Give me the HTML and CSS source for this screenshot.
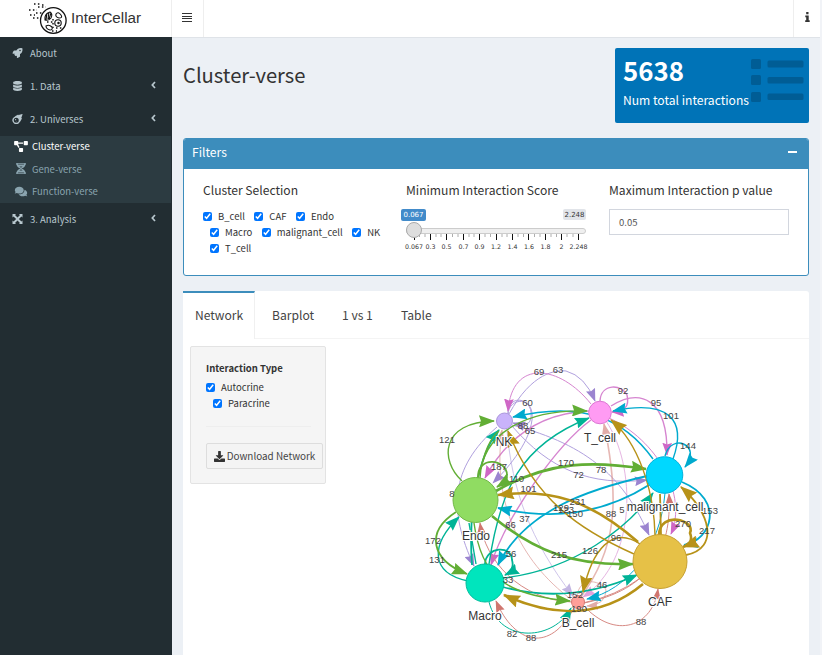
FILE: index.html
```html
<!DOCTYPE html>
<html lang="en">
<head>
<meta charset="utf-8">
<title>InterCellar</title>
<link rel="stylesheet" href="styles.css">
</head>
<body>
<div class="app">
<header class="topbar">
  <div class="brand">
    <svg class="logo" viewBox="0 0 40 34" fill="none" stroke="#111" stroke-width="1.1">
      <circle cx="25.300" cy="18.500" r="12.800" stroke-width="1.300"/>
      <path d="M17 18q-1-6 5-8q3 2 1 6q-2 3-6 2zM19 11l-1 7M21 10l-1 7M23 11l-2 6"/>
      <path d="M28 12q2-3 5 1q2 3-2 3q-4-1-3-4zM18 24q3-2 6 1q1 3-2 3q-4-1-4-4z"/>
      <circle cx="30" cy="21" r="3.200"/><circle cx="30.500" cy="21" r=".7"/>
      <path stroke-width="1.400" stroke-dasharray="1.500 2.400" d="M1 8h8M6 2h7M2 13h5M5 16h7M10 5h8M8 11h6M14 3h2M25 17v9M28 26h7M19 20h6M24 29h5"/>
    </svg>
    <span>InterCellar</span>
  </div>
  <div class="toggle"><svg width="10" height="9" viewBox="0 0 10 9" fill="#333" shape-rendering="crispEdges"><path d="M0 0h10v1H0zM0 2.500h10v1.300H0zM0 5h10v1.300H0zM0 7.500h10v1.300H0z"/></svg></div>
  <div class="info"><svg width="5" height="10" viewBox="0 0 5 10" fill="#333"><path d="M1.200 0h2.300v2.200H1.200zM.3 3.500h3.400v4.700h1V10H.2V8.200h1V5.200H.3z"/></svg></div>
</header>
<div class="body">
<nav class="side">
  <a class="item"><svg class="ic" viewBox="0 0 512 512"><path d="M505.120 19.094c-1.190-5.531-6.658-11-12.207-12.188C460.716 0 435.507 0 410.407 0 307.175 0 245.269 55.203 199.052 128H94.838c-16.348.016-35.557 11.875-42.887 26.484L2.516 253.297A28.400 28.400 0 0 0 0 264a24 24 0 0 0 24 24h103.816l-22.475 22.469c-11.365 11.361-12.996 32.258 0 45.250l50.905 50.906c11.156 11.188 32.156 13.156 45.277 0l22.475-22.469V488a24 24 0 0 0 24 24 28.560 28.560 0 0 0 10.707-2.516l98.728-49.390c14.629-7.297 26.508-26.500 26.508-42.860V312.797c72.598-46.313 128.035-108.406 128.035-211.094 0-25.203 0-50.406-6.856-82.609zM384.040 168a40 40 0 1 1 40-40 40 40 0 0 1-40 40z"/></svg><span>About</span></a>
  <a class="item"><svg class="ic" viewBox="-32 0 512 512"><path d="M448 73.143v45.714C448 159.143 347.667 192 224 192S0 159.143 0 118.857V73.143C0 32.857 100.333 0 224 0s224 32.857 224 73.143zM448 176v102.857C448 319.143 347.667 352 224 352S0 319.143 0 278.857V176c48.125 33.143 136.208 48.572 224 48.572S399.874 209.143 448 176zm0 160v102.857C448 479.143 347.667 512 224 512S0 479.143 0 438.857V336c48.125 33.143 136.208 48.572 224 48.572S399.874 369.143 448 336z"/></svg><span>1. Data</span><svg class="chev" viewBox="0 0 5 8"><path d="M4 1L1.300 4L4 7"/></svg></a>
  <a class="item"><svg class="ic" viewBox="0 0 512 512"><path d="M511.328 20.803c-11.608 38.702-34.307 111.702-61.303 187.700 6.999 2.094 13.404 4 18.607 5.594a16.060 16.060 0 0 1 9.498 22.906c-22.106 42.296-82.690 152.795-142.478 214.404-1 1.093-2 2.500-3 3.500A194.830 194.830 0 1 1 57.085 179.410c1-1 2.406-2 3.500-3 61.600-59.905 171.973-120.405 214.373-142.498a16.058 16.058 0 0 1 22.903 9.500c1.593 5.094 3.500 11.594 5.593 18.593C379.348 35.006 452.431 12.303 491.128.709a16.183 16.183 0 0 1 20.200 20.094zM319.951 320A127.980 127.980 0 1 0 191.970 448 127.976 127.976 0 0 0 319.951 320zM191.970 288a32 32 0 1 1-32-32 32 32 0 0 1 32 32zm32 80a16 16 0 1 1-16-16 16 16 0 0 1 16 16z"/></svg><span>2. Universes</span><svg class="chev" viewBox="0 0 5 8"><path d="M4 1L1.300 4L4 7"/></svg></a>
  <div class="sub">
    <a class="on"><svg class="ic2" viewBox="0 0 640 512"><path d="M384 320H256c-17.670 0-32 14.330-32 32v128c0 17.670 14.330 32 32 32h128c17.670 0 32-14.330 32-32V352c0-17.670-14.330-32-32-32zM192 32c0-17.670-14.330-32-32-32H32C14.330 0 0 14.330 0 32v128c0 17.670 14.330 32 32 32h95.720l73.160 128.040C211.980 300.980 232.400 288 256 288h.280L192 175.510V128h224V64H192V32zM608 0H480c-17.670 0-32 14.330-32 32v128c0 17.670 14.330 32 32 32h128c17.670 0 32-14.330 32-32V32c0-17.670-14.330-32-32-32z"/></svg><span>Cluster-verse</span></a>
    <a><svg class="ic2" viewBox="0 0 14 12" fill="none" stroke="#8aa4af" stroke-width="1.400"><path d="M2.500 0v1.500Q3 4 7 6T11.500 10.500V12M11.500 0v1.500Q11 4 7 6T2.500 10.500V12M2.500 1h9M3.500 3h7M3.500 9h7M2.500 11h9"/></svg><span>Gene-verse</span></a>
    <a><svg class="ic2" viewBox="0 0 576 512"><path d="M416 192c0-88.400-93.100-160-208-160S0 103.600 0 192c0 34.300 14.100 65.900 38 92-13.400 30.200-35.500 54.200-35.800 54.500-2.200 2.300-2.800 5.700-1.500 8.700S4.800 352 8 352c36.600 0 66.900-12.300 88.700-25 32.200 15.700 70.300 25 111.300 25 114.900 0 208-71.600 208-160zm122 220c23.900-26 38-57.700 38-92 0-66.900-53.500-124.200-129.300-148.100.9 6.600 1.300 13.300 1.300 20.100 0 105.900-107.700 192-240 192-10.800 0-21.300-.8-31.700-1.900C207.800 439.600 281.800 480 368 480c41 0 79.100-9.200 111.300-25 21.800 12.700 52.100 25 88.700 25 3.200 0 6.100-1.900 7.300-4.800 1.300-2.900.7-6.300-1.500-8.700-.3-.3-22.400-24.200-35.800-54.500z"/></svg><span>Function-verse</span></a>
  </div>
  <a class="item"><svg class="ic" viewBox="0 0 10 10"><path d="M0 0h3.600L2.500 1.100 5 3.600 7.500 1.100 6.400 0H10v3.600L8.900 2.500 6.400 5l2.500 2.500L10 6.400V10H6.400l1.100-1.100L5 6.400 2.500 8.900 3.600 10H0V6.400l1.100 1.100L3.600 5 1.100 2.500 0 3.600z"/></svg><span>3. Analysis</span><svg class="chev" viewBox="0 0 5 8"><path d="M4 1L1.300 4L4 7"/></svg></a>
</nav>
<main class="main">
  <section class="head">
    <h1>Cluster-verse</h1>
    <div class="vbox">
      <div><b>5638</b><p>Num total interactions</p></div>
      <svg class="list" width="53" height="44" viewBox="0 0 53 44" fill="#005d95"><rect y="1" width="10" height="10" rx="1.500"/><rect y="17" width="10" height="10" rx="1.500"/><rect y="34" width="10" height="10" rx="1.500"/><rect x="16.500" y="2.500" width="36" height="7" rx="1.500"/><rect x="16.500" y="19" width="36" height="6.500" rx="1.500"/><rect x="16.500" y="35.500" width="36" height="6.500" rx="1.500"/></svg>
    </div>
  </section>
  <section class="filters">
    <div class="fhead"><span>Filters</span><i class="minus"></i></div>
    <div class="fbody">
      <div class="c1">
        <h4>Cluster Selection</h4>
        <div class="checks">
          <label><input type="checkbox" checked>B_cell</label><label><input type="checkbox" checked>CAF</label><label><input type="checkbox" checked>Endo</label>
        </div>
        <div class="checks in">
          <label><input type="checkbox" checked>Macro</label><label><input type="checkbox" checked>malignant_cell</label><label><input type="checkbox" checked>NK</label>
        </div>
        <div class="checks in"><label><input type="checkbox" checked>T_cell</label></div>
      </div>
      <div class="c2">
        <h4>Minimum Interaction Score</h4>
        <svg class="slider" width="196" height="46" viewBox="400 207 196 46">
          <rect x="401" y="209" width="25" height="12" rx="2" fill="#428bca"/>
          <rect x="563" y="209" width="23" height="11" rx="2" fill="#e1e4e9"/>
          <rect x="406.500" y="228.500" width="179" height="5" rx="2.500" fill="#efefef" stroke="#ccc"/>
          <path stroke="#999" stroke-width=".8" d="M419.500 234v3M425 234v3M436 234v3M441 234v3M452.500 234v3M458 234v3M469 234v3M474 234v3M485 234v3M490.500 234v3M502 234v3M507 234v3M518 234v3M523.500 234v3M534.500 234v3M540 234v3M551 234v3M556.500 234v3M567 234v3M573 234v3"/>
          <path stroke="#111" d="M414.500 234v6M430.500 234v6M446.500 234v6M463.500 234v6M479.500 234v6M496.500 234v6M512.500 234v6M528.500 234v6M545.500 234v6M561.500 234v6M578.500 234v6"/>
          <circle cx="414" cy="230" r="7.500" fill="#dedede" stroke="#aaa"/>
          <g text-anchor="middle" class="tick">
            <text class="big" x="413.500" y="217" fill="#fff">0.067</text><text class="big" x="574.500" y="217">2.248</text>
            <text x="414" y="249">0.067</text><text x="430.500" y="249">0.3</text><text x="446.500" y="249">0.5</text><text x="463.500" y="249">0.7</text><text x="479.500" y="249">0.9</text><text x="496" y="249">1.2</text><text x="512.500" y="249">1.4</text><text x="529" y="249">1.6</text><text x="545.500" y="249">1.8</text><text x="561.500" y="249">2</text><text x="578.500" y="249">2.248</text>
          </g>
        </svg>
      </div>
      <div class="c3">
        <h4>Maximum Interaction p value</h4>
        <div class="field">0.05</div>
      </div>
    </div>
  </section>
  <section class="tabs">
    <div class="tabrow"><a class="t1">Network</a><a class="t2">Barplot</a><a class="t3">1 vs 1</a><a class="t4">Table</a></div>
    <div class="pane">
      <div class="well">
        <strong>Interaction Type</strong>
        <label><input type="checkbox" checked>Autocrine</label>
        <label class="in"><input type="checkbox" checked>Paracrine</label>
        <hr>
        <button><svg width="11" height="11" viewBox="0 0 512 512" fill="#333"><path d="M216 0h80c13 0 24 11 24 24v168h88c18 0 27 21 14 34L270 378c-8 8-20 8-28 0L90 226c-13-13-4-34 14-34h88V24c0-13 11-24 24-24zm296 376v112c0 13-11 24-24 24H24c-13 0-24-11-24-24V376c0-13 11-24 24-24h147l49 49c20 20 52 20 72 0l49-49h147c13 0 24 11 24 24z"/></svg><span>Download Network</span></button>
      </div>
      <svg class="net" width="469" height="316" viewBox="340 339 469 316">
        <defs>
          <marker id="g" viewBox="0 0 16 12" refX="15" refY="6" markerWidth="16" markerHeight="12" markerUnits="userSpaceOnUse" orient="auto"><path d="M0 0L16 6L0 12L2 6z" fill="#62ae35"/></marker>
          <marker id="m" viewBox="0 0 16 12" refX="15" refY="6" markerWidth="15" markerHeight="11.500" markerUnits="userSpaceOnUse" orient="auto"><path d="M0 0L16 6L0 12L2 6z" fill="#00b396"/></marker>
          <marker id="b" viewBox="0 0 16 12" refX="15" refY="6" markerWidth="15" markerHeight="11" markerUnits="userSpaceOnUse" orient="auto"><path d="M0 0L16 6L0 12L2 6z" fill="#00aace"/></marker>
          <marker id="c" viewBox="0 0 16 12" refX="15" refY="6" markerWidth="17" markerHeight="13" markerUnits="userSpaceOnUse" orient="auto"><path d="M0 0L16 6L0 12L2 6z" fill="#b79218"/></marker>
          <marker id="r" viewBox="0 0 16 12" refX="15" refY="6" markerWidth="12" markerHeight="9" markerUnits="userSpaceOnUse" orient="auto"><path d="M0 0L16 6L0 12L2 6z" fill="#d0766f"/></marker>
          <marker id="p" viewBox="0 0 16 12" refX="15" refY="6" markerWidth="13" markerHeight="10" markerUnits="userSpaceOnUse" orient="auto"><path d="M0 0L16 6L0 12L2 6z" fill="#cf67c6"/></marker>
          <marker id="v" viewBox="0 0 16 12" refX="15" refY="6" markerWidth="13" markerHeight="10" markerUnits="userSpaceOnUse" orient="auto"><path d="M0 0L16 6L0 12L2 6z" fill="#9b84d0"/></marker>
        </defs>
        <g class="e thin v">
          <path d="M509 414C532 372 556 370 566 371Q585 376 595 401"/>
          <path d="M508 415C508 397 535 395 532 420S505 471 493 483"/>
          <path d="M508 414C507 394 534 396 531 418Q530 428 513 423"/>
          <path d="M497 427C450 468 448 510 474 566"/>
          <path d="M512 426C550 470 590 486 647 480"/>
          <path class="faint" d="M507 430C512 490 530 540 573 596"/>
          <path d="M512 425C590 445 625 480 649 535"/>
        </g>
        <g class="e thin p">
          <path d="M591 404C560 365 512 358 508 411"/>
          <path d="M600 401C601 383 622 384 627 395Q631 412 612 412" class="mid"/>
          <path d="M611 406C640 388 668 398 667 455" class="mid"/>
          <path d="M589 411C540 413 507 437 485 478" class="mid"/>
          <path d="M591 420C558 444 506 516 491 565" class="mid"/>
          <path d="M606 421C636 465 638 560 583 597" class="faint"/>
          <path d="M609 418C657 440 688 495 671 534"/>
        </g>
        <g class="e thin r">
          <path d="M581 597C615 550 621 505 604 424" class="faint thickr"/>
          <path d="M572 600C518 560 492 500 502 430" class="faint"/>
          <path d="M572 602C520 600 485 560 480 523"/>
          <path d="M574 608C550 653 515 645 496 601"/>
          <path d="M584 606C615 640 653 627 658 589"/>
          <path d="M584 603C650 590 672 550 669 494"/>
          <path d="M577 596C580 574 603 582 606 590Q606 605 587 606" class="faint"/>
          <path d="M583 603Q616 596 642 577" class="nohead"/>
        </g>
        <g class="e b">
          <path d="M673 459C687 420 669 399 613 411" class="mid"/>
          <path d="M665 456C671 432 703 445 685 467" class="mid"/>
          <path d="M653 459C625 420 585 400 513 417" class="mid"/>
          <path d="M649 485C600 516 550 520 498 508"/>
          <path d="M647 476C590 489 525 510 498 565"/>
          <path d="M682 482C725 500 712 540 684 545"/>
          <path d="M665 493C660 550 627 590 587 599" class="thin"/>
        </g>
        <g class="e m">
          <path d="M472 565C468 510 478 455 499 430"/>
          <path d="M489 564C500 490 520 445 589 418" class="mid"/>
          <path d="M503 578C575 570 628 527 653 493" class="mid"/>
          <path d="M468 581C430 573 430 545 459 517" class="mid"/>
          <path d="M485 564C486 546 512 545 512 560Q515 570 505 575"/>
          <path d="M503 587Q570 605 637 575"/>
          <path d="M489 602C500 645 555 640 571 608" class="thin"/>
          <path d="M476 564L469 523" class="nohead mid"/>
        </g>
        <g class="e g">
          <path d="M462 481C440 461 440 422 494 421" class="mid"/>
          <path d="M478 478C485 450 490 438 499 431" class="mid nohead"/>
          <path d="M480 478C482 431 530 409 587 411" class="mid"/>
          <path d="M478 478C477 455 507 459 507 475Q508 480 497 487"/>
          <path d="M496 491C550 460 595 461 646 469" class="fat"/>
          <path d="M492 516C535 552 575 566 633 564" class="fat"/>
          <path d="M456 512C425 532 431 560 467 574"/>
          <path d="M474 523C481 575 503 595 570 601" class="mid"/>
        </g>
        <g class="e c">
          <path d="M638 542C590 500 550 488 498 495" class="fat"/>
          <path d="M634 554C580 530 535 500 508 431" class="mid"/>
          <path d="M655 535C654 490 638 442 611 420" class="mid"/>
          <path d="M686 555C720 548 710 512 681 487"/>
          <path d="M659 535C660 510 696 520 690 533Q694 543 683 547" class="fat"/>
          <path d="M640 544C612 525 592 550 583 592" class="mid"/>
          <path d="M643 584C600 620 550 616 504 595" class="fat"/>
          <path d="M661 535L660 494" class="nohead"/>
        </g>
        <g class="nodes">
          <circle cx="504.500" cy="421" r="8" fill="#c9b3fb" stroke="#ac97db"/>
          <circle cx="600" cy="412.500" r="11.300" fill="#ff9bf3" stroke="#dc78d2"/>
          <circle cx="664.500" cy="475" r="18.300" fill="#00d8ff" stroke="#00b2dc"/>
          <circle cx="660" cy="561.500" r="27" fill="#e6c147" stroke="#c6a030"/>
          <circle cx="578" cy="602" r="6.500" fill="#ff9f99" stroke="#d77a74"/>
          <circle cx="485" cy="583" r="19" fill="#00e5bd" stroke="#00bd9c"/>
          <circle cx="475.500" cy="500" r="22.500" fill="#90dc62" stroke="#71b846"/>
        </g>
        <g class="el">
          <text x="539" y="375">69</text><text x="558" y="373">63</text><text x="527.500" y="406">60</text><text x="523" y="429">88</text><text x="530" y="434">65</text><text x="447" y="443">121</text><text x="499" y="470">187</text><text x="516.500" y="482">110</text><text x="528.500" y="491.500">101</text><text x="452" y="497">8</text>
          <text x="566" y="466">170</text><text x="578.500" y="478">72</text><text x="601" y="473">78</text><text x="623" y="394">92</text><text x="656" y="406">95</text><text x="671" y="419">101</text><text x="688" y="449">144</text>
          <text x="577.500" y="505">231</text><text x="561" y="511">129</text><text x="566" y="513">123</text><text x="575" y="517">150</text><text x="524.500" y="522">37</text><text x="510.500" y="527.500">66</text><text x="611" y="517">88</text><text x="622" y="513">5</text>
          <text x="616" y="541">96</text><text x="590" y="554">126</text><text x="559" y="558">215</text><text x="602" y="588">46</text><text x="511" y="557">56</text><text x="508" y="583">33</text><text x="575" y="598">152</text><text x="579" y="612">190</text><text x="433" y="544">172</text><text x="437" y="563">131</text><text x="512" y="637">82</text><text x="531" y="641">88</text><text x="641" y="625">88</text><text x="683" y="527">270</text><text x="710" y="514">153</text><text x="707" y="534">217</text>
        </g>
        <g class="nl">
          <text x="504" y="446">NK</text><text x="600" y="442">T_cell</text><text x="665" y="511">malignant_cell</text><text x="660" y="606">CAF</text><text x="578" y="627">B_cell</text><text x="485" y="620">Macro</text><text x="476" y="540">Endo</text>
        </g>
      </svg>
    </div>
  </section>
</main>
</div>
</div>
</body>
</html>
```
FILE: styles.css
```css
* { box-sizing: border-box; }
body { margin: 0; height: 655px; overflow: hidden; background: #f1f3f7; font-family: "Noto Sans CJK SC", "Noto Sans", sans-serif; font-size: 9.500px; line-height: 16px; color: #333; }
h1, h4, p { margin: 0; font-weight: 400; }
.app { width: 820px; height: 655px; overflow: hidden; display: flex; flex-direction: column; background: #ecf0f5; }
.topbar { flex: none; height: 37px; display: flex; background: #fff; box-shadow: 0 1px 0 #dfe3e8; z-index: 1; }
.brand { width: 172px; border-right: 1px solid #eee; display: flex; align-items: center; gap: 3px; padding-left: 28px; font: 15.200px/35px "Liberation Sans", sans-serif; }
.brand span { padding-bottom: 2px; }
.logo { width: 40px; height: 34px; }
.toggle { width: 32px; border-right: 1px solid #eee; display: flex; align-items: center; justify-content: center; padding: 0 2px 3px 0; }
.info { margin-left: auto; width: 27px; border-left: 1px solid #eee; display: flex; align-items: center; justify-content: center; padding-bottom: 3px; }
.body { flex: 1; min-height: 0; display: flex; }
.side { width: 172px; background: #222d32; z-index: 2; }
.item { height: 33px; padding: 0 16px 2px 12px; display: flex; align-items: center; color: #b8c7ce; }
.item span { margin-left: 7px; }
.ic { width: 11px; height: 10px; fill: #b8c7ce; }
.chev { width: 5px; height: 8px; margin: 0 0 2px auto; fill: none; stroke: #b8c7ce; stroke-width: 1.700; }
.sub { width: 171px; height: 67px; background: #2c3b41; display: grid; grid-template-rows: 22px 23px 22px; }
.sub a { display: flex; align-items: center; padding: 0 0 2px 14px; color: #8aa4af; }
.sub .on { color: #fff; }
.ic2 { width: 14px; height: 11px; margin-right: 4px; fill: #8aa4af; }
.on .ic2 { fill: #fff; }
.main { flex: 1; padding: 11px 11px 0; display: flex; flex-direction: column; }
.head { height: 75px; display: flex; justify-content: space-between; }
h1 { font-size: 20.200px; line-height: 54px; }
.vbox { width: 194px; height: 75px; border-radius: 2px; background: #0073b7; color: #fff; padding: 7px 5px 0 8px; display: flex; justify-content: space-between; white-space: nowrap; }
.vbox > div { width: 129px; }
.vbox b { display: block; font-size: 25.800px; line-height: 29px; font-weight: 700; }
.vbox p { font-size: 12.100px; line-height: 18px; margin-top: 7px; }
.list { margin-top: 3px; flex: none; }
.filters { height: 138px; margin-top: 15px; border: 1px solid #3c8dbc; border-radius: 3px; background: #fff; overflow: hidden; }
.fhead { height: 30px; background: #3c8dbc; color: #fff; padding: 0 11px 4px 8px; display: flex; align-items: center; justify-content: space-between; font-size: 12.100px; }
.minus { width: 9px; height: 2px; background: #fff; }
.fbody { display: flex; padding: 12px 19px 0; }
h4 { font-size: 12.100px; line-height: 17px; white-space: nowrap; }
.c1 { width: 198px; }
.c2 { width: 208px; }
.c2 h4 { margin-left: 5px; }
.c3 { width: 180px; }
.slider { display: block; margin-top: 9px; margin-left: -1px; }
.tick { font: 6.300px "DejaVu Sans", sans-serif; fill: #333; }
.big { font-size: 7px; }
.field { margin-top: 11px; height: 26px; border: 1px solid #d2d6de; padding: 4px 9px; color: #555; }
input { appearance: auto; width: 9px; height: 9px; margin: 1px 6px 0 0; flex: none; }
label { display: flex; align-items: center; height: 16px; }
.c1 .checks { display: flex; gap: 9.500px; height: 16px; }
h4 + .checks { margin-top: 10px; }
.checks.in { padding-left: 7px; }
.tabs { margin-top: 15px; flex: 1; background: #fff; border-radius: 3px 3px 0 0; }
.tabrow { height: 48px; display: flex; border-bottom: 1px solid #f4f4f4; font-size: 12.100px; color: #444; }
.tabrow a { line-height: 48px; white-space: nowrap; }
.t1 { width: 72px; padding-left: 12px; margin-bottom: -1px; background: #fff; border-top: 2px solid #3c8dbc; border-right: 1px solid #f0f0f0; }
.tabrow .t1 { line-height: 44px; }
.t2 { width: 87px; padding-left: 17px; }
.t3 { width: 59px; }
.pane { display: flex; padding-left: 7px; }
.well { width: 136px; height: 138px; margin: 7px 14px 0 0; flex: none; padding: 14px 2px 0 15px; background: #f5f5f5; border: 1px solid #e3e3e3; border-radius: 2px; }
.well strong { display: block; line-height: 15px; margin-bottom: 3px; }
.well label.in { padding-left: 7px; }
.well hr { border: 0; border-top: 1px solid #eee; margin: 15px 12px 16px 0; }
.well button { width: 117px; height: 26px; padding: 0; display: flex; align-items: center; justify-content: center; gap: 2px; background: #f4f4f4; border: 1px solid #ddd; border-radius: 2px; font: 9.900px/16px "Noto Sans CJK SC", sans-serif; color: #444; white-space: nowrap; }
.well button span { padding-bottom: 1px; }
.net { flex: none; }
.e { fill: none; stroke-width: 1.800; }
.e.thin, .thin { stroke-width: 1; }
.e .mid { stroke-width: 1.400; }
.e .fat { stroke-width: 2.600; }
.e .faint { opacity: .6; }
.e .thickr { stroke-width: 1.600; }
.v { stroke: #b0a0de; } .v path { marker-end: url(#v); }
.p { stroke: #d685d0; } .p path { marker-end: url(#p); }
.r { stroke: #d78983; } .r path { marker-end: url(#r); }
.b { stroke: #00aace; } .b path { marker-end: url(#b); }
.m { stroke: #00b396; } .m path { marker-end: url(#m); }
.g { stroke: #62ae35; } .g path { marker-end: url(#g); }
.c { stroke: #b79218; } .c path { marker-end: url(#c); }
.e .nohead { marker-end: none; }
.el, .nl { font-family: "Liberation Sans", sans-serif; text-anchor: middle; fill: #444; }
.el { font-size: 9.500px; }
.nl { font-size: 12px; fill: #343434; stroke: #fff; stroke-width: 2px; paint-order: stroke; }
```
